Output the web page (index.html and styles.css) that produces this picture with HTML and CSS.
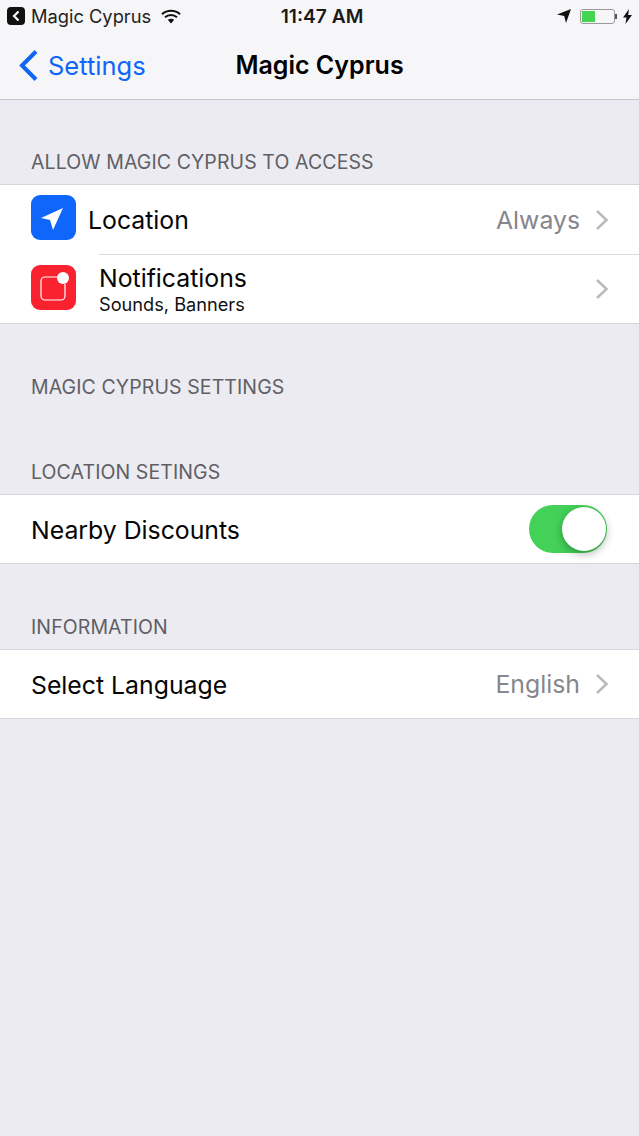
FILE: index.html
```html
<!DOCTYPE html>
<html lang="en">
<head>
    <meta charset="UTF-8">
    <meta name="viewport" content="width=device-width, initial-scale=1.0">
    <title>Magic Cyprus</title>
    <link rel="stylesheet" href="styles.css">
</head>
<body>
    <header class="topbar">
        <div class="status">
            <div class="status-left">
                <span class="back-badge">
                    <svg width="10" height="12" viewBox="0 0 10 12"><path d="M7.500 1.500L3 6l4.500 4.500" fill="none" stroke="#fff" stroke-width="2.200"/></svg>
                </span>
                <span class="status-app">Magic Cyprus</span>
                <svg class="wifi" width="20" height="15" viewBox="0 0 20 15">
                    <path d="M1 5.200C6 .6 14 .6 19 5.200" fill="none" stroke="#111" stroke-width="2"/>
                    <path d="M4 8.300C7.400 5.300 12.600 5.300 16 8.300" fill="none" stroke="#111" stroke-width="2"/>
                    <path d="M6.800 10.800C8.700 9.300 11.300 9.300 13.200 10.800L10 14.500z" fill="#111"/>
                </svg>
            </div>
            <div class="status-time">11:47 AM</div>
            <div class="status-right">
                <svg width="14" height="14" viewBox="0 0 14 14"><path d="M0 5.500L14 0 9 14 7.200 7z" fill="#111"/></svg>
                <span class="battery"><span class="battery-level"></span></span>
                <svg class="bolt" width="9" height="15" viewBox="0 0 9 15"><path d="M6 0L0 8.500h3.500L2.500 15 9 6H5.200z" fill="#111"/></svg>
            </div>
        </div>
        <nav class="navbar">
            <a class="nav-back">
                <svg width="21" height="33" viewBox="0 0 21 33"><path d="M18 2.500L4 16.500l14 14" fill="none" stroke="#0f66f5" stroke-width="4"/></svg>
                <span>Settings</span>
            </a>
            <div class="nav-title">Magic Cyprus</div>
        </nav>
    </header>

    <div class="section-label first">ALLOW MAGIC CYPRUS TO ACCESS</div>
    <div class="group">
        <div class="row row-location">
            <span class="app-icon blue">
                <svg width="45" height="45" viewBox="0 0 45 45"><path d="M10 23L32 13 22 35 19 25z" fill="#fff"/></svg>
            </span>
            <span class="row-title">Location</span>
            <span class="row-value">Always</span>
            <svg class="chevron" width="14" height="22" viewBox="0 0 14 22"><path d="M2 2l9.500 9L2 20" fill="none" stroke="#b9b9be" stroke-width="2.500"/></svg>
        </div>
        <div class="row row-notif">
            <span class="app-icon red">
                <svg width="45" height="45" viewBox="0 0 45 45">
                    <path d="M27 12H14a4 4 0 0 0-4 4v15a4 4 0 0 0 4 4h16a4 4 0 0 0 4-4V19" fill="none" stroke="#fff" stroke-width="1.200"/>
                    <circle cx="32" cy="13" r="6" fill="#fff"/>
                </svg>
            </span>
            <div class="row-stack">
                <span class="row-title">Notifications</span>
                <span class="row-sub">Sounds, Banners</span>
            </div>
            <svg class="chevron" width="14" height="22" viewBox="0 0 14 22"><path d="M2 2l9.500 9L2 20" fill="none" stroke="#b9b9be" stroke-width="2.500"/></svg>
        </div>
    </div>

    <div class="section-label settings">MAGIC CYPRUS SETTINGS</div>
    <div class="section-label location">LOCATION SETINGS</div>
    <div class="group">
        <div class="row row-plain">
            <span class="row-title">Nearby Discounts</span>
            <span class="toggle"><span class="knob"></span></span>
        </div>
    </div>

    <div class="section-label info">INFORMATION</div>
    <div class="group">
        <div class="row row-plain">
            <span class="row-title">Select Language</span>
            <span class="row-value">English</span>
            <svg class="chevron" width="14" height="22" viewBox="0 0 14 22"><path d="M2 2l9.500 9L2 20" fill="none" stroke="#b9b9be" stroke-width="2.500"/></svg>
        </div>
    </div>
</body>
</html>
```

FILE: styles.css
```css
html, body { margin: 0; padding: 0; }
body { width: 639px; height: 1136px; overflow: hidden; background-color: #ebebf1; font-family: Inter, "Liberation Sans", Arial, sans-serif; color: #000; }

/* top bar */
.topbar { height: 99px; background-color: #f6f6f8; border-bottom: 1px solid #c6c6cc; }
.status { height: 32px; display: grid; grid-template-columns: 1fr auto 1fr; align-items: center; padding: 0 7px; }
.status-left { display: flex; align-items: center; }
.back-badge { width: 18px; height: 18px; border-radius: 4px; background: #111; display: flex; align-items: center; justify-content: center; }
.status-app { margin-left: 6px; font-size: 18.300px; color: #222; }
.wifi { margin-left: 10px; }
.status-time { font-size: 19.200px; font-weight: 600; color: #1a1a1a; padding-left: 5px; }
.status-right { display: flex; align-items: center; justify-content: flex-end; }
.battery { width: 35px; height: 15px; margin-left: 9px; border: 1px solid #9a9a9a; border-radius: 3px; box-sizing: border-box; padding: 1px; position: relative; }
.battery::after { content: ""; position: absolute; right: -3px; top: 4px; width: 2px; height: 5px; background: #555; }
.battery-level { display: block; width: 13px; height: 100%; background: #44d552; }
.bolt { margin-left: 8px; }

.navbar { height: 66px; display: grid; grid-template-columns: 1fr auto 1fr; align-items: center; }
.nav-back { display: flex; align-items: center; color: #0f66f5; font-size: 25.500px; padding-left: 18px; grid-column: 1; }
.nav-back span { margin-left: 9px; }
.nav-title { grid-column: 2; font-size: 25px; font-weight: 600; }

/* sections */
.section-label { padding-left: 31px; font-size: 19.500px; line-height: 24px; letter-spacing: 0.100px; color: #5f5f65; }
.section-label.first { padding-top: 50px; padding-bottom: 10px; }
.section-label.settings { padding-top: 51px; }
.section-label.location { padding-top: 61px; padding-bottom: 10px; }
.section-label.info { padding-top: 51px; padding-bottom: 10px; }

.group { background: #fff; border-top: 1px solid #d6d6da; border-bottom: 1px solid #d6d6da; }
.row { height: 68px; display: flex; align-items: center; padding-left: 31px; padding-right: 30px; }
.row-location { height: 70px; position: relative; }
.row-location::after { content: ""; position: absolute; left: 99px; right: 0; bottom: 0; height: 1px; background: #dcdce0; }
.row-plain .row-title { padding-top: 2px; }
.row-title { font-size: 24.800px; color: #050505; }
.row-value { margin-left: auto; font-size: 24.800px; color: #86868c; }
.row-value + .chevron { margin-left: 15px; }
.chevron { flex-shrink: 0; }
.row-notif .chevron { margin-left: auto; }

.app-icon { width: 45px; height: 45px; border-radius: 9px; flex-shrink: 0; display: flex; align-items: center; justify-content: center; }
.app-icon.blue { background: #0f66fb; margin-top: -5px; }
.app-icon.red { background: #fb2230; margin-top: -4px; }
.row-location .row-title { margin-left: 12px; }
.row-stack { margin-left: 23px; display: flex; flex-direction: column; }
.row-stack .row-title { line-height: 30px; }
.row-sub { font-size: 18.200px; line-height: 23px; color: #111; }

.toggle { margin-left: auto; margin-right: 2px; width: 78px; height: 48px; border-radius: 24px; background: #43d158; position: relative; }
.knob { position: absolute; right: 1px; top: 2px; width: 44px; height: 44px; border-radius: 50%; background: #fff; box-shadow: 0 3px 8px rgba(0, 0, 0, 0.3); }
```
